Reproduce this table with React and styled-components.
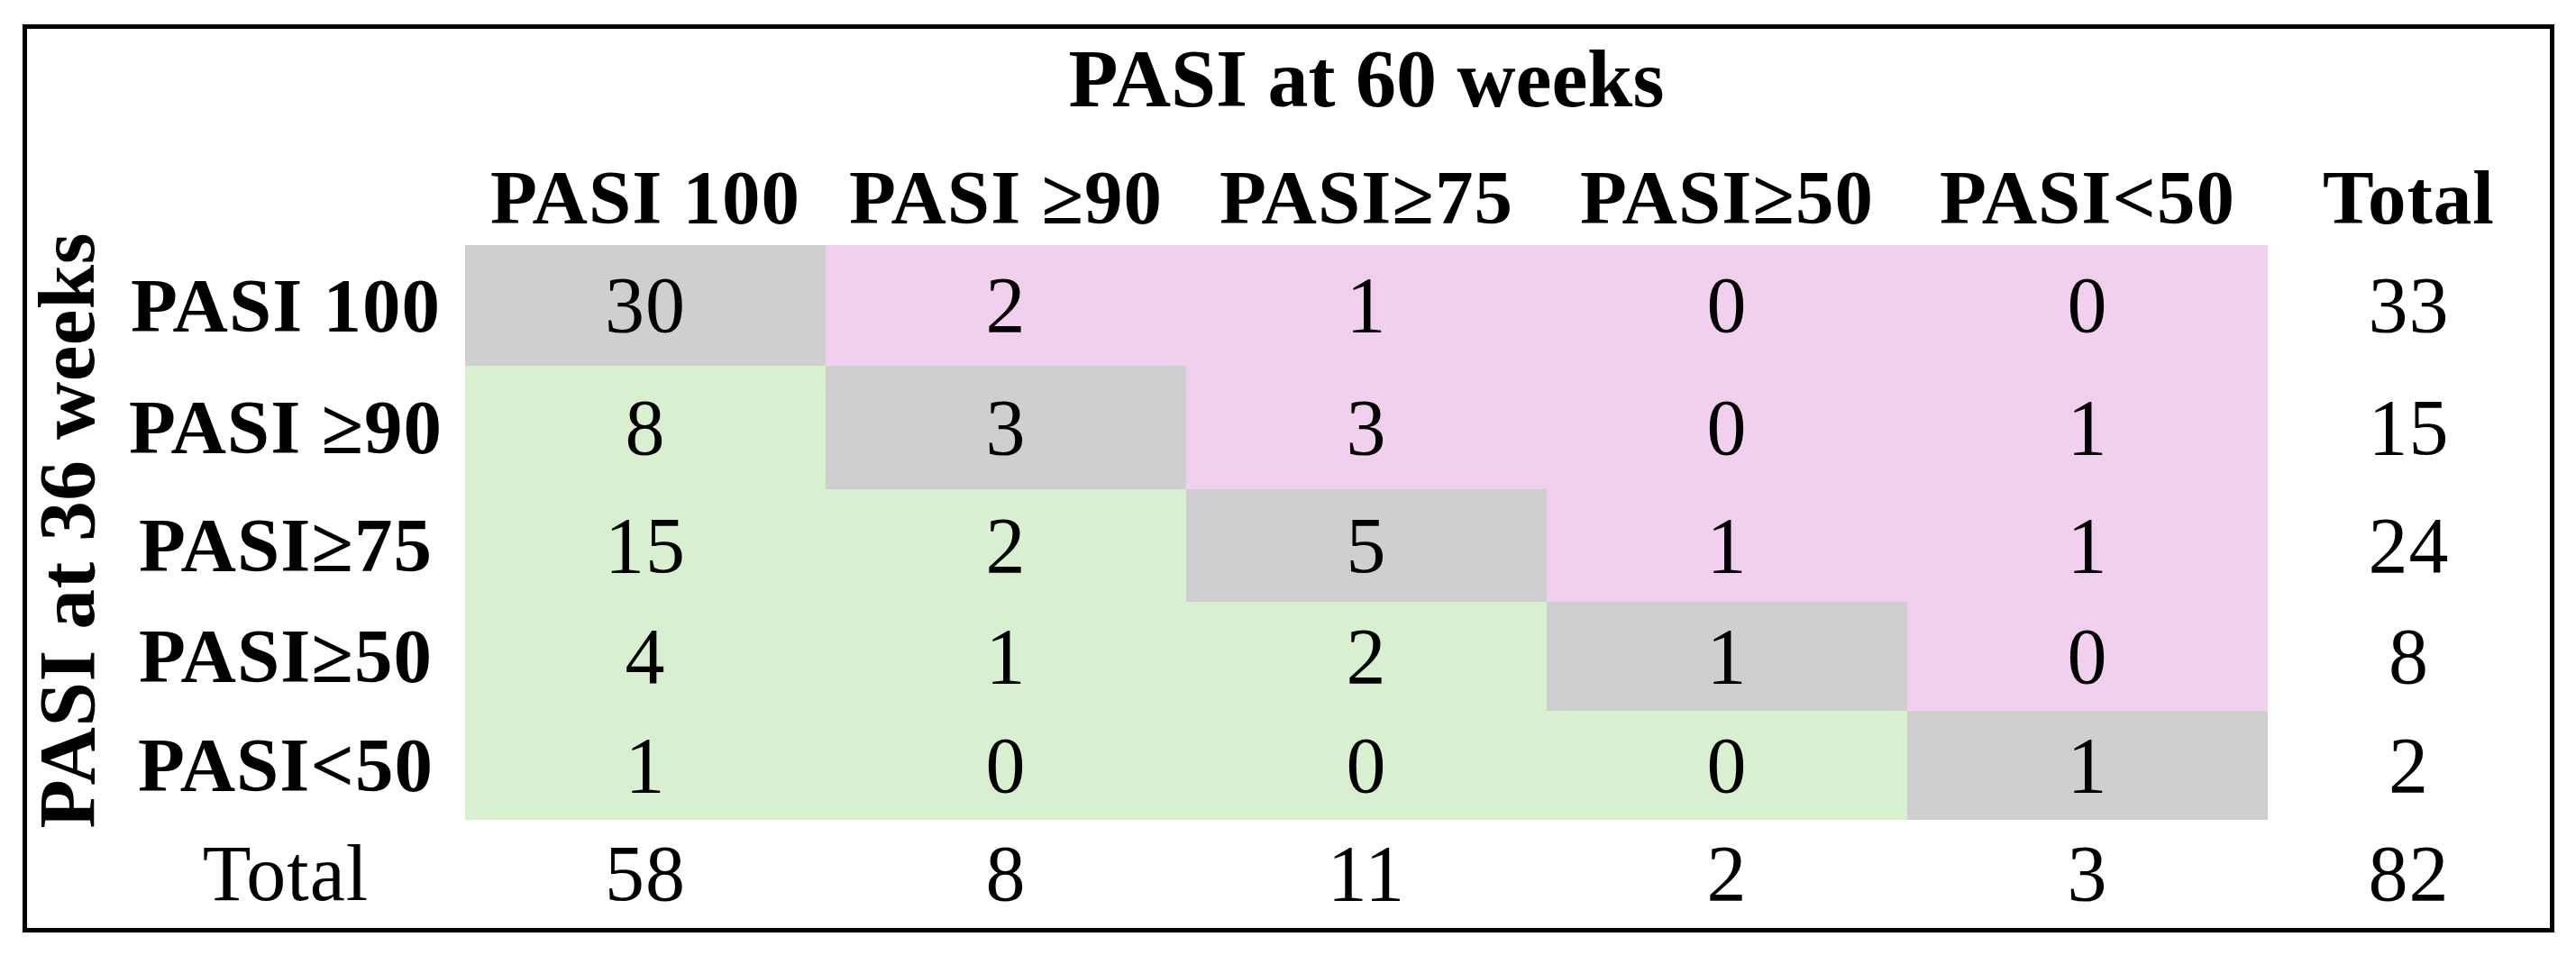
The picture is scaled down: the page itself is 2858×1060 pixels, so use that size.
import React from "react";
import styled, { createGlobalStyle } from "styled-components";

const GlobalStyle = createGlobalStyle`
  html, body {
    margin: 0;
    padding: 0;
    background: #ffffff;
  }
`;

const TONES = {
  same: "#cfcfcf",
  up: "#f1cfee",
  down: "#d9f0d0",
  none: "transparent",
};

const Frame = styled.div`
  box-sizing: border-box;
  margin: 27px 0 0 25px;
  width: 2809px;
  height: 1008px;
  border: 5px solid #000;
  background: #fff;
  display: grid;
  grid-template-columns: 88px 398px repeat(5, 400px) 313px;
  grid-template-rows: 118px 122px 134px 137px 125px 121px 121px 120px;
  font-family: "Liberation Serif", "Times New Roman", serif;
  color: #000;
`;

const Title = styled.div`
  grid-column: 3 / 8;
  grid-row: 1;
  text-align: center;
  font-size: 90px;
  font-weight: 700;
  line-height: 1;
  padding-top: 11px;
  white-space: nowrap;
`;

const ColHead = styled.div`
  grid-row: 2;
  grid-column: ${(p) => p.$col};
  align-self: end;
  text-align: center;
  font-size: 85px;
  font-weight: 700;
  letter-spacing: 1px;
  line-height: 1;
  padding-bottom: 10px;
  white-space: nowrap;
`;

const SideLabel = styled.div`
  grid-column: 1;
  grid-row: 3 / 8;
  justify-self: center;
  align-self: center;
  margin-bottom: 4px;
  writing-mode: vertical-rl;
  transform: rotate(180deg);
  font-size: 89px;
  font-weight: 700;
  line-height: 1;
  letter-spacing: 0.5px;
  white-space: nowrap;
`;

const RowHead = styled.div`
  grid-column: 2;
  grid-row: ${(p) => p.$row};
  display: flex;
  align-items: center;
  justify-content: center;
  font-size: ${(p) => (p.$plain ? "88px" : "85px")};
  font-weight: ${(p) => (p.$plain ? 400 : 700)};
  letter-spacing: 1px;
  line-height: 1;
  white-space: nowrap;
`;

const Cell = styled.div`
  grid-column: ${(p) => p.$col};
  grid-row: ${(p) => p.$row};
  background: ${(p) => TONES[p.$tone]};
  display: flex;
  align-items: center;
  justify-content: center;
  font-size: 88px;
  font-weight: 400;
  letter-spacing: 1px;
  line-height: 1;
`;

const heads = ["PASI 100", "PASI \u226590", "PASI\u226575", "PASI\u226550", "PASI<50"];

const data = [
  [30, 2, 1, 0, 0, 33],
  [8, 3, 3, 0, 1, 15],
  [15, 2, 5, 1, 1, 24],
  [4, 1, 2, 1, 0, 8],
  [1, 0, 0, 0, 1, 2],
];

const totals = [58, 8, 11, 2, 3, 82];

function toneFor(i, j) {
  if (j > 4) return "none";
  if (i === j) return "same";
  return j > i ? "up" : "down";
}

export default function App() {
  return (
    <>
      <GlobalStyle />
      <Frame>
        <Title>PASI at 60 weeks</Title>
        {heads.map((h, j) => (
          <ColHead key={h} $col={j + 3}>
            {h}
          </ColHead>
        ))}
        <ColHead $col={8}>Total</ColHead>

        <SideLabel>PASI at 36 weeks</SideLabel>

        {data.map((row, i) => (
          <React.Fragment key={i}>
            <RowHead $row={i + 3}>{heads[i]}</RowHead>
            {row.map((v, j) => (
              <Cell key={j} $row={i + 3} $col={j + 3} $tone={toneFor(i, j)}>
                {v}
              </Cell>
            ))}
          </React.Fragment>
        ))}

        <RowHead $row={8} $plain>
          Total
        </RowHead>
        {totals.map((v, j) => (
          <Cell key={j} $row={8} $col={j + 3} $tone="none">
            {v}
          </Cell>
        ))}
      </Frame>
    </>
  );
}
